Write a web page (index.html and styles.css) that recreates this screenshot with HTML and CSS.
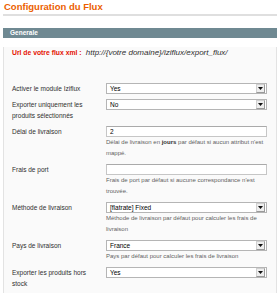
FILE: index.html
```html
<!DOCTYPE html>
<html lang="fr">
<head>
    <meta charset="UTF-8">
    <meta name="viewport" content="width=device-width, initial-scale=1.0">
    <title>Configuration du Flux</title>
    <link rel="stylesheet" href="styles.css">
</head>
<body>

    <div class="content-header">
        <h3>Configuration du Flux</h3>
    </div>

    <div class="entry-edit">
        <div class="entry-edit-head">
            <h4>Generale</h4>
        </div>

        <div class="fieldset">
            <p class="url-note">
                <span class="url-label">Url de votre flux xml :</span>
                <em>http://{votre domaine}/iziflux/export_flux/</em>
            </p>

            <div class="form-list">
                <div class="form-row">
                    <label>Activer le module Iziflux</label>
                    <div class="value">
                        <div class="select"><span class="select-text">Yes</span><span class="select-arrow"><svg width="5" height="3" viewBox="0 0 5 3"><path d="M0 0h5L2.5 3z" fill="#111"/></svg></span></div>
                    </div>
                </div>

                <div class="form-row">
                    <label>Exporter uniquement les produits sélectionnés</label>
                    <div class="value">
                        <div class="select"><span class="select-text">No</span><span class="select-arrow"><svg width="5" height="3" viewBox="0 0 5 3"><path d="M0 0h5L2.5 3z" fill="#111"/></svg></span></div>
                    </div>
                </div>

                <div class="form-row">
                    <label>Délai de livraison</label>
                    <div class="value">
                        <div class="input-text">2</div>
                        <p class="note">Délai de livraison en <strong>jours</strong> par défaut si aucun attribut n'est mappé.</p>
                    </div>
                </div>

                <div class="form-row">
                    <label>Frais de port</label>
                    <div class="value">
                        <div class="input-text"></div>
                        <p class="note">Frais de port par défaut si aucune correspondance n'est trouvée.</p>
                    </div>
                </div>

                <div class="form-row">
                    <label>Méthode de livraison</label>
                    <div class="value">
                        <div class="select"><span class="select-text">[flatrate] Fixed</span><span class="select-arrow"><svg width="5" height="3" viewBox="0 0 5 3"><path d="M0 0h5L2.5 3z" fill="#111"/></svg></span></div>
                        <p class="note">Méthode de livraison par défaut pour calculer les frais de livraison</p>
                    </div>
                </div>

                <div class="form-row">
                    <label>Pays de livraison</label>
                    <div class="value">
                        <div class="select"><span class="select-text">France</span><span class="select-arrow"><svg width="5" height="3" viewBox="0 0 5 3"><path d="M0 0h5L2.5 3z" fill="#111"/></svg></span></div>
                        <p class="note">Pays par défaut pour calculer les frais de livraison</p>
                    </div>
                </div>

                <div class="form-row">
                    <label>Exporter les produits hors stock</label>
                    <div class="value">
                        <div class="select"><span class="select-text">Yes</span><span class="select-arrow"><svg width="5" height="3" viewBox="0 0 5 3"><path d="M0 0h5L2.5 3z" fill="#111"/></svg></span></div>
                    </div>
                </div>
            </div>
        </div>
    </div>

</body>
</html>
```

FILE: styles.css
```css
body {
    font-family: "Liberation Sans", Arial, Helvetica, sans-serif;
    margin: 0;
    padding: 1px 3px 0;
    background-color: #fff;
    color: #2f2f2f;
}

.content-header {
    border-bottom: 2px solid #dfdfdf;
    padding-bottom: 2px;
    margin-bottom: 12px;
}

.content-header h3 {
    margin: 0;
    padding-left: 1px;
    font-size: 9.5px;
    line-height: 11px;
    color: #eb5e00;
}

.entry-edit-head {
    background-color: #6f8992;
    height: 10px;
    padding-left: 7px;
}

.entry-edit-head h4 {
    margin: 0;
    font-size: 6.5px;
    line-height: 10px;
    color: #fff;
}

.fieldset {
    background-color: #fafafa;
    border: 1px solid #e3e3e3;
    border-top: none;
    padding: 0 8px 6px;
}

.url-note {
    margin: 9px 0 24px;
    font-size: 8px;
    line-height: 12px;
    color: #2f2f2f;
}

.url-label {
    font-size: 6.8px;
    font-weight: bold;
    color: #e41101;
    padding-right: 2px;
}

.form-row {
    display: grid;
    grid-template-columns: 94px 161px;
    padding-bottom: 5px;
}

.form-row label {
    font-size: 6.5px;
    line-height: 11px;
    color: #2f2f2f;
    padding-right: 10px;
}

.select {
    display: flex;
    align-items: center;
    height: 11px;
    box-sizing: border-box;
    border: 1px solid #b5b5b5;
    background-color: #fff;
}

.select-text {
    flex: 1;
    padding-left: 3px;
    font-size: 6.5px;
    line-height: 9px;
    color: #000;
}

.select-arrow {
    display: flex;
    align-items: center;
    justify-content: center;
    width: 7px;
    height: 7px;
    margin-right: 1px;
    border: 1px solid #9a9a9a;
    border-top-color: #d0d0d0;
    border-left-color: #d0d0d0;
    background-color: #eee;
}

.input-text {
    height: 11px;
    box-sizing: border-box;
    border: 1px solid #c6c6c6;
    border-top-color: #aaa;
    background-color: #fff;
    padding-left: 3px;
    font-size: 6.5px;
    line-height: 9px;
    color: #000;
}

.note {
    margin: 0;
    font-size: 6px;
    line-height: 11px;
    color: #5f5f5f;
}

.note strong {
    color: #2f2f2f;
}
```
